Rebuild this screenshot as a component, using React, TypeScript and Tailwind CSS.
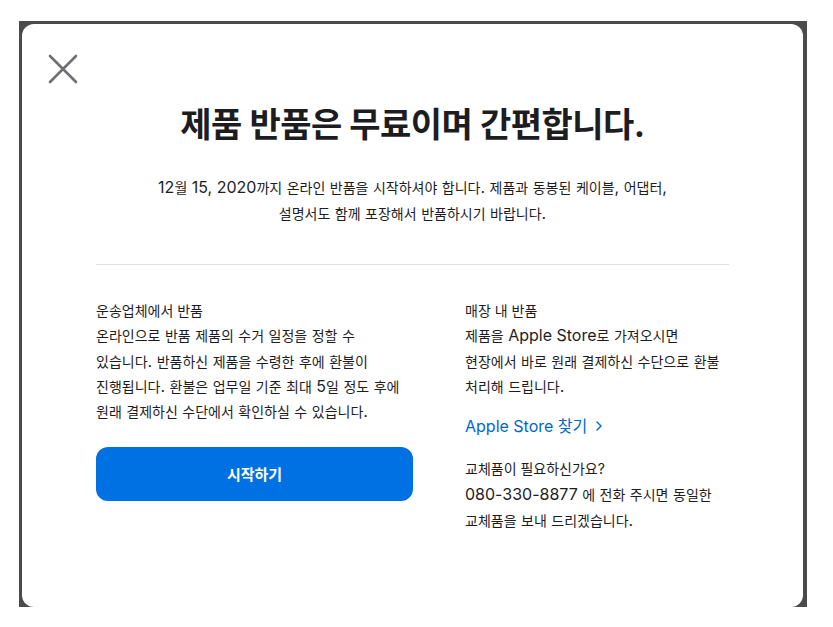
const FONT = "font-['Inter','Noto_Sans_CJK_KR',sans-serif]";

const LEFT_LINES = [
  "온라인으로 반품 제품의 수거 일정을 정할 수",
  "있습니다. 반품하신 제품을 수령한 후에 환불이",
  "진행됩니다. 환불은 업무일 기준 최대 5일 정도 후에",
  "원래 결제하신 수단에서 확인하실 수 있습니다.",
];

const RIGHT_LINES = [
  "제품을 Apple Store로 가져오시면",
  "현장에서 바로 원래 결제하신 수단으로 환불",
  "처리해 드립니다.",
];

const PHONE_LINES = ["080-330-8877 에 전화 주시면 동일한", "교체품을 보내 드리겠습니다."];

// Latin runs render a touch larger than the hangul, like the original's font pairing
function Mixed({ text }: { text: string }) {
  const parts = text.split(/([\x20-\x7e]+)/).filter(Boolean);
  return (
    <>
      {parts.map((p, i) =>
        /^[\x20-\x7e]+$/.test(p) ? (
          <span key={i} className="text-[16px] leading-none">
            {p}
          </span>
        ) : (
          <span key={i}>{p}</span>
        )
      )}
    </>
  );
}

function Lines({ lines }: { lines: string[] }) {
  return (
    <>
      {lines.map((l) => (
        <span key={l} className="block whitespace-nowrap">
          <Mixed text={l} />
        </span>
      ))}
    </>
  );
}

export default function App() {
  return (
    <div className={`${FONT} min-h-[627px] bg-white pt-[21px] pl-[19px]`}>
      <div className="w-[788px] h-[586px] bg-[#4b4b4b] pt-[3px] pl-[3px] pr-[4px]">
        <div className="relative h-full bg-white rounded-[12px] pt-[81px] text-[#1d1d1f]">
          <button
            type="button"
            aria-label="닫기"
            className="absolute left-[26px] top-[30px] w-[30px] h-[30px] flex items-center justify-center"
          >
            <svg width="30" height="30" viewBox="0 0 30 30" fill="none">
              <path d="M2 2L28 28M28 2L2 28" stroke="#6e6e73" strokeWidth="2.6" strokeLinecap="round" />
            </svg>
          </button>

          <h1 className="text-center text-[34px] leading-[40px] font-bold tracking-[-0.5px] text-[#1d1d1f]">
            제품 반품은 무료이며 간편합니다.
          </h1>
          <p className="mt-[30px] text-center text-[14px] leading-[26px]">
            <Lines
              lines={[
                "12월 15, 2020까지 온라인 반품을 시작하셔야 합니다. 제품과 동봉된 케이블, 어댑터,",
                "설명서도 함께 포장해서 반품하시기 바랍니다.",
              ]}
            />
          </p>

          <div className="mx-[74px] mt-[37px] border-t border-[#e0e0e0]" />

          <div className="mx-[74px] mt-[33px] grid grid-cols-[317px_1fr] gap-[52px] text-[14px] leading-[25.25px]">
            <div>
              <p>운송업체에서 반품</p>
              <p>
                <Lines lines={LEFT_LINES} />
              </p>
              <button
                type="button"
                className="mt-[23px] w-full h-[54px] rounded-[12px] bg-[#0071e3] text-white text-[15px] font-semibold"
              >
                시작하기
              </button>
            </div>
            <div>
              <p>매장 내 반품</p>
              <p>
                <Lines lines={RIGHT_LINES} />
              </p>
              <a href="#" className="mt-[14px] flex items-center gap-[9px] text-[#0066cc] text-[16px] leading-[26px]">
                Apple Store 찾기
                <svg width="6" height="10" viewBox="0 0 6 10" fill="none">
                  <path d="M1 1L5 5L1 9" stroke="#0066cc" strokeWidth="1.4" strokeLinecap="round" strokeLinejoin="round" />
                </svg>
              </a>
              <div className="mt-[17px] leading-[26px]">
                <p>교체품이 필요하신가요?</p>
                <p>
                  <Lines lines={PHONE_LINES} />
                </p>
              </div>
            </div>
          </div>
        </div>
      </div>
    </div>
  );
}
